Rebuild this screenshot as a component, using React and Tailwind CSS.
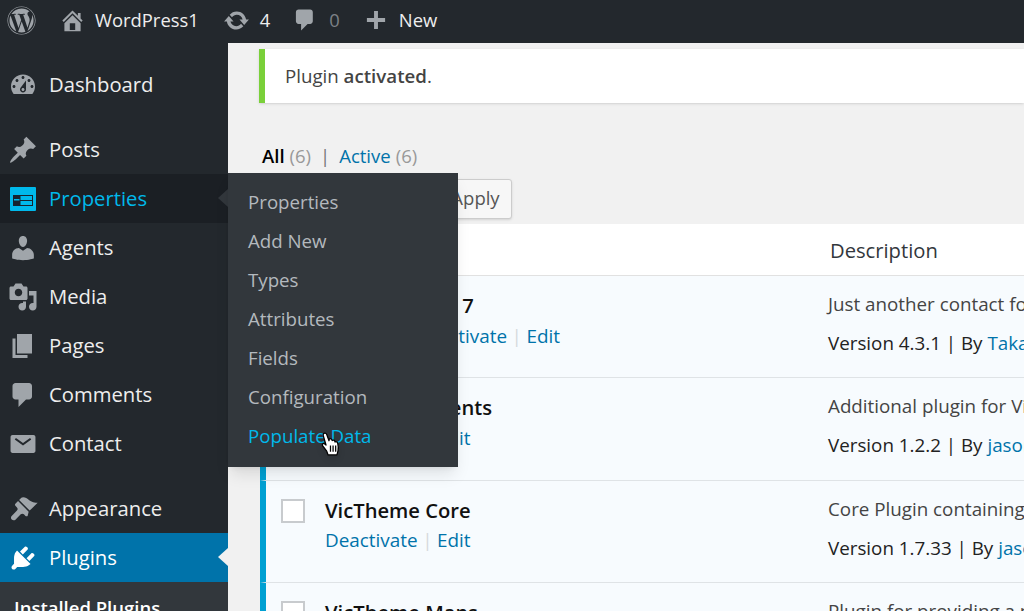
import React from 'react'
import { FaWordpress } from 'react-icons/fa'

const icons = {
    dashboard: "M3.76 16h12.48c1.1-1.37 1.76-3.11 1.76-5 0-4.42-3.58-8-8-8s-8 3.58-8 8c0 1.89.66 3.63 1.76 5zM10 4c.55 0 1 .45 1 1s-.45 1-1 1-1-.45-1-1 .45-1 1-1zM6 6c.55 0 1 .45 1 1s-.45 1-1 1-1-.45-1-1 .45-1 1-1zm8 0c.55 0 1 .45 1 1s-.45 1-1 1-1-.45-1-1 .45-1 1-1zm-5.37 5.55L12 7v6c0 1.1-.9 2-2 2s-2-.9-2-2c0-.57.24-1.08.63-1.45zM4 10c.55 0 1 .45 1 1s-.45 1-1 1-1-.45-1-1 .45-1 1-1zm12 0c.55 0 1 .45 1 1s-.45 1-1 1-1-.45-1-1 .45-1 1-1zm-5 3c0-.55-.45-1-1-1s-1 .45-1 1 .45 1 1 1 1-.45 1-1z",
    pin: "M10.44 3.02l1.82-1.82 6.36 6.35-1.83 1.82c-1.05-.68-2.48-.57-3.41.36l-.75.75c-.92.93-1.04 2.35-.35 3.41l-1.83 1.82-2.41-2.41-2.8 2.79c-.42.42-3.38 2.71-3.8 2.29s1.86-3.39 2.28-3.81l2.79-2.79L4.1 9.36l1.83-1.82c1.05.69 2.48.57 3.4-.36l.75-.75c.93-.92 1.05-2.35.36-3.41z",
    users: "M10 9.25c-2.27 0-2.73-3.44-2.73-3.44C7 4.02 7.82 2 9.97 2c2.16 0 2.98 2.02 2.71 3.81 0 0-.41 3.44-2.68 3.44zm0 2.57L12.72 10c2.39 0 4.52 2.33 4.52 4.53v2.49s-3.65 1.13-7.24 1.13c-3.65 0-7.24-1.13-7.24-1.13v-2.49c0-2.25 1.94-4.48 4.47-4.48z",
    media: "M13 11V4c0-.55-.45-1-1-1h-1.67L9 1H5L3.67 3H2c-.55 0-1 .45-1 1v7c0 .55.45 1 1 1h10c.55 0 1-.45 1-1zM7 4.5c1.38 0 2.5 1.12 2.5 2.5S8.38 9.5 7 9.5 4.5 8.38 4.5 7 5.62 4.5 7 4.5zM14 6h5v10.5c0 1.38-1.12 2.5-2.5 2.5S14 17.88 14 16.5s1.12-2.5 2.5-2.5c.17 0 .34.02.5.05V9h-3V6zm-4 8.05V13h2v3.5c0 1.38-1.12 2.5-2.5 2.5S7 17.88 7 16.5 8.12 14 9.5 14c.17 0 .34.02.5.05z",
    page: "M6 15V2h10v13H6zm-1 1h8v2H3V5h2v11z",
    comments: "M5 2h9c1.1 0 2 .9 2 2v7c0 1.1-.9 2-2 2h-2l-5 5v-5H5c-1.1 0-2-.9-2-2V4c0-1.1.9-2 2-2z",
    email: "M3 4h14c.7 0 1.3.6 1.3 1.3v9.4c0 .7-.6 1.3-1.3 1.3H3c-.7 0-1.3-.6-1.3-1.3V5.3C1.7 4.6 2.3 4 3 4zM4.5 7l5.5 4 5.5-4-.8-1L10 9.4 5.3 6z",
    appearance: "M14.48 11.06L7.41 3.99l1.5-1.5c.5-.56 2.3-.47 3.51.32 1.21.8 1.43 1.28 2.91 2.1 1.18.64 2.45 1.26 4.45.85zm-.71.71L6.7 4.7 4.93 6.47c-.39.39-.39 1.02 0 1.41l1.06 1.06c.59.56.59 1.53 0 2.12l-3.53 3.53c-.67.66-.64 1.8.03 2.47.67.67 1.8.7 2.47.03l3.53-3.53c.6-.59 1.56-.59 2.12 0l1.06 1.06c.39.39 1.02.39 1.41 0z",
    plugins: "M13.11 4.36L9.87 7.6 8 5.73l3.24-3.24c.35-.34 1.05-.2 1.56.32.52.51.66 1.21.31 1.55zm-8 1.77l.91-1.12 9.01 9.01-1.19.84c-.71.71-2.63 1.16-3.82 1.16H6.14L4.9 17.26c-.59.59-1.54.59-2.12 0-.59-.58-.59-1.53 0-2.12l1.24-1.24v-3.88c0-1.13.4-3.19 1.09-3.89zm7.26 3.97l3.24-3.24c.34-.35 1.04-.21 1.55.31.52.51.66 1.21.31 1.55l-3.24 3.25z",
    update: "M10.2 3.28c3.53 0 6.43 2.61 6.92 6h2.08l-3.5 4-3.5-4h2.32c-.45-1.97-2.21-3.45-4.32-3.45-1.45 0-2.73.71-3.54 1.78L4.95 5.66C6.23 4.2 8.11 3.28 10.2 3.28zm-.4 13.44c-3.52 0-6.43-2.61-6.92-6H.8l3.5-4c1.17 1.33 2.33 2.67 3.5 4H5.48c.45 1.97 2.21 3.45 4.32 3.45 1.45 0 2.73-.71 3.54-1.78l1.71 1.95c-1.28 1.46-3.15 2.38-5.25 2.38z",
    home: "M16 8.5l1.53 1.53-1.06 1.06L10 4.62l-6.47 6.47-1.06-1.06L10 2.5l4 4v-2h2v4zm-6-2.46l6 5.99V18H4v-5.97zM12 17v-5H8v5h4z",
    plus: "M17 8.5v3h-5.5V17h-3v-5.5H3v-3h5.5V3h3v5.5z",
}

function Dash({ name, className }) {
    return (
        <svg viewBox="0 0 20 20" fill="currentColor" fillRule="evenodd" className={className} aria-hidden="true">
            <path d={icons[name]} />
        </svg>
    )
}

function PropertiesIcon() {
    return (
        <svg viewBox="0 0 26 24" className="h-[24px] w-[26px]" aria-hidden="true">
            <rect width="26" height="24" rx="1" fill="#00b9eb" />
            <rect x="3" y="8" width="20" height="11" fill="#16242f" />
            <rect x="4" y="12" width="5.5" height="1.5" fill="#00b9eb" />
            <rect x="10.5" y="9" width="11.5" height="4" fill="#00b9eb" />
            <rect x="10.5" y="14" width="11.5" height="4" fill="#00b9eb" />
        </svg>
    )
}

function HandCursor() {
    return (
        <svg viewBox="0 0 20 24" className="absolute left-[72px] top-[15px] h-[25px] w-[22px] drop-shadow-md" aria-hidden="true">
            <path
                d="M3 1.5c1-.8 2.4-.3 2.9.9l2.2 6 .1-1.4c1-.9 2.3-.6 2.7.5l.2.8c.9-.8 2.2-.5 2.6.6l.2.7c1-.6 2.2-.1 2.5 1 .6 2.5.9 5.3.3 7.6l-1 3.8H7.2l-1.3-3.6-4-5.2c-.8-1.3.4-2.7 1.8-1.9l1.5 1.2L2.6 3.6c-.3-.8-.1-1.6.4-2.1z"
                fill="#fff"
                stroke="#000"
                strokeWidth="1.2"
                strokeLinejoin="round"
            />
            <path d="M9.5 13v6M12 13v6M14.5 13v6" stroke="#000" strokeWidth="1.2" />
        </svg>
    )
}

const flyoutItems = ['Properties', 'Add New', 'Types', 'Attributes', 'Fields', 'Configuration']

function Flyout() {
    return (
        <ul className="absolute left-full top-[-1px] z-10 w-[230px] bg-[#32373c] pt-[10px] pb-[11px] pl-[20px] text-[18.7px] text-[#b4b9be] shadow-lg">
            {flyoutItems.map((item) => (
                <li key={item} className="flex h-[39px] items-center">{item}</li>
            ))}
            <li className="relative flex h-[39px] items-center text-[#00b9eb]">
                Populate Data
                <HandCursor />
            </li>
        </ul>
    )
}

function MenuItem({ icon, label }) {
    return (
        <li className="flex h-[49px] items-center">
            <span className="mr-[3px] flex w-[46px] justify-center text-[#a0a5aa]">
                <Dash name={icon} className="h-[30px] w-[30px]" />
            </span>
            <span>{label}</span>
        </li>
    )
}

function Sidebar() {
    return (
        <aside className="w-[228px] shrink-0 bg-[#23282d] text-[20.25px] text-[#eeeeee]">
            <ul className="pt-[17px]">
                <MenuItem icon="dashboard" label="Dashboard" />
            </ul>
            <ul className="pt-[16px]">
                <MenuItem icon="pin" label="Posts" />
                <li className="relative flex h-[49px] items-center bg-[#1b1f24] text-[#00b9eb]">
                    <span className="mr-[3px] flex w-[46px] justify-center"><PropertiesIcon /></span>
                    <span>Properties</span>
                    <span className="absolute right-0 top-[15px] border-y-[9px] border-r-[10px] border-y-transparent border-r-[#32373c]" />
                    <Flyout />
                </li>
                <MenuItem icon="users" label="Agents" />
                <MenuItem icon="media" label="Media" />
                <MenuItem icon="page" label="Pages" />
                <MenuItem icon="comments" label="Comments" />
                <MenuItem icon="email" label="Contact" />
            </ul>
            <ul className="pt-[16px]">
                <MenuItem icon="appearance" label="Appearance" />
                <li className="relative flex h-[49px] items-center bg-[#0073aa] text-white">
                    <span className="mr-[3px] flex w-[46px] justify-center"><Dash name="plugins" className="h-[30px] w-[30px]" /></span>
                    <span>Plugins</span>
                    <span className="absolute right-0 top-[15px] border-y-[9px] border-r-[10px] border-y-transparent border-r-[#f1f1f1]" />
                </li>
                <li className="h-[60px] bg-[#32373c] pl-[14px] pt-[12px] text-[18.5px] font-semibold text-white">Installed Plugins</li>
            </ul>
        </aside>
    )
}

function TopBar() {
    return (
        <header className="flex h-[43px] shrink-0 items-center bg-[#23282d] pb-[3px] text-[18.4px] text-[#eeeeee]">
            <FaWordpress className="ml-[7px] h-[29px] w-[29px] text-[#a0a5aa]" />
            <Dash name="home" className="ml-[23px] h-[27px] w-[27px] text-[#a0a5aa]" />
            <span className="ml-[9px]">WordPress1</span>
            <Dash name="update" className="ml-[24px] h-[27px] w-[27px] text-[#a0a5aa]" />
            <span className="ml-[10px]">4</span>
            <Dash name="comments" className="ml-[22px] h-[26px] w-[26px] text-[#a0a5aa]" />
            <span className="ml-[11px] text-[#7c8186]">0</span>
            <Dash name="plus" className="ml-[23px] h-[26px] w-[26px] text-[#a0a5aa]" />
            <span className="ml-[10px]">New</span>
        </header>
    )
}

const plugins = [
    {
        name: 'Contact Form 7',
        actions: ['Settings', 'Deactivate', 'Edit'],
        description: 'Just another contact form plugin. Simple but flexible.',
        version: '4.3.1',
        author: 'Takayuki Miyoshi',
    },
    {
        name: 'VicTheme Agents',
        actions: ['Deactivate', 'Edit'],
        description: 'Additional plugin for VicTheme Core and Properties.',
        version: '1.2.2',
        author: 'jason.xie@victheme.com',
    },
    {
        name: 'VicTheme Core',
        actions: ['Deactivate', 'Edit'],
        description: 'Core Plugin containing the main functions for the theme.',
        version: '1.7.33',
        author: 'jason.xie@victheme.com',
    },
    {
        name: 'VicTheme Maps',
        actions: ['Deactivate', 'Edit'],
        description: 'Plugin for providing a map element for the theme.',
        version: '1.0.4',
        author: 'jason.xie@victheme.com',
    },
]

function PluginRow({ plugin }) {
    return (
        <div className="flex h-[102.3px] shrink-0 border-b border-[#dfe3e6] border-l-[6px] border-l-[#00a0d2] bg-[#f7fbfe]">
            <div className="w-[59px] shrink-0 pl-[15px] pt-[18px]">
                <div className="h-[24px] w-[24px] border-2 border-[#c8cbce] bg-white" />
            </div>
            <div className="w-[503px] shrink-0 pt-[14px]">
                <p className="h-[30px] text-[20.2px] leading-[30px] font-semibold text-[#111]">{plugin.name}</p>
                <p className="mt-[1px] flex h-[30px] items-center text-[18.9px] text-[#0073aa]">
                    {plugin.actions.map((action, i) => (
                        <React.Fragment key={action}>
                            {i > 0 && <span className="mx-[4.5px] text-[#d5d9dc]">|</span>}
                            <span>{action}</span>
                        </React.Fragment>
                    ))}
                </p>
            </div>
            <div className="pt-[13px] text-[18.8px] whitespace-nowrap">
                <p className="h-[30px] leading-[30px] text-[#444]">{plugin.description}</p>
                <p className="mt-[9px] h-[30px] leading-[30px] text-[#222]">
                    Version {plugin.version} | By <span className="text-[#0073aa]">{plugin.author}</span>
                </p>
            </div>
        </div>
    )
}

function Main() {
    return (
        <main className="min-w-0 flex-1 overflow-hidden bg-[#f1f1f1] pl-[31px]">
            <div className="mt-[6px] flex h-[54px] items-center border-l-[6px] border-[#7ad03a] bg-white pl-[20px] text-[18.7px] text-[#444] shadow-sm">
                <p>Plugin <strong className="font-semibold">activated</strong>.</p>
            </div>
            <div className="mt-[39px] ml-[3px] flex h-[28px] items-center text-[18.5px] text-[#999]">
                <span className="font-semibold text-black">All</span>
                <span className="ml-[5px]">(6)</span>
                <span className="mx-[9px] text-[#777]">|</span>
                <span className="text-[#0073aa]">Active</span>
                <span className="ml-[5px]">(6)</span>
            </div>
            <div className="mt-[9px] flex h-[40px] items-center gap-[8px]">
                <div className="flex h-[40px] w-[172px] items-center border border-[#ccc] bg-white pl-2 text-[18px] text-[#444]">Bulk Actions</div>
                <button type="button" className="h-[40px] w-[73px] rounded-[3px] border border-[#ccc] bg-[#f7f7f7] pb-[2px] text-[18.5px] text-[#555] shadow-sm">Apply</button>
            </div>
            <div className="mt-[5px] ml-[1px] flex h-[52px] items-center border-b border-[#e1e1e1] bg-white pl-[570px] pt-[2px] text-[20.2px] text-[#32373c]">Description</div>
            <div className="ml-[1px] flex flex-col">
                {plugins.map((plugin) => (
                    <PluginRow key={plugin.name} plugin={plugin} />
                ))}
            </div>
        </main>
    )
}

export default function App() {
    return (
        <div className="flex h-[611px] w-[1024px] flex-col overflow-hidden font-['Open_Sans',sans-serif]">
            <TopBar />
            <div className="flex min-h-0 flex-1">
                <Sidebar />
                <Main />
            </div>
        </div>
    )
}
